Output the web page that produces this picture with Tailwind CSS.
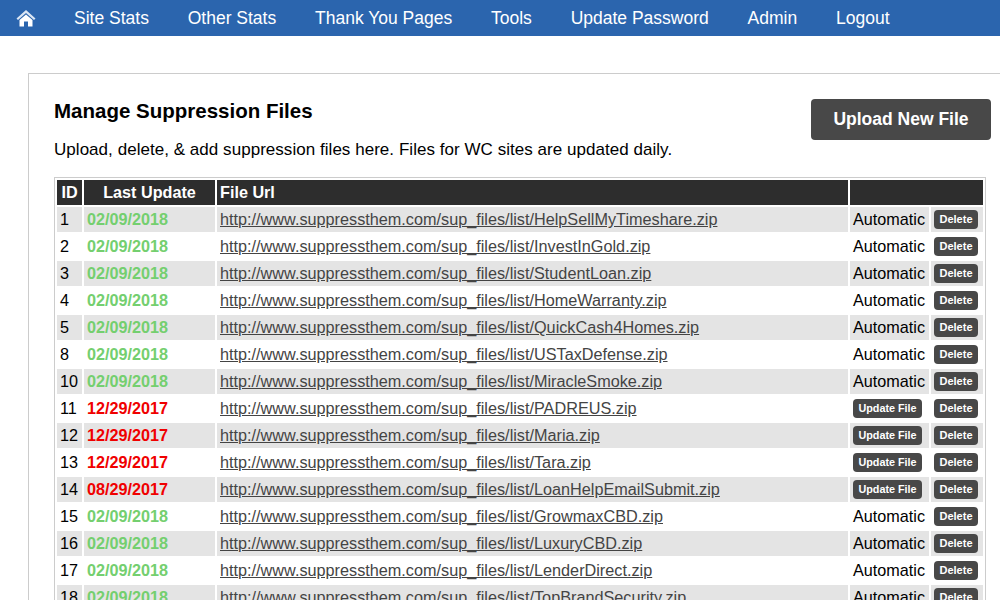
<!DOCTYPE html>
<html lang="en">
  <head>
    <meta charset="UTF-8" />
    <meta name="viewport" content="width=device-width, initial-scale=1.0" />
    <script src="https://cdn.jsdelivr.net/npm/@tailwindcss/browser@4"></script>
    <title>Manage Suppression Files</title>
  </head>
  <body class="bg-white text-black font-['Liberation_Sans',Arial,sans-serif] h-[600px] overflow-hidden">
    <nav class="h-[36px] bg-[#2b65ae] flex items-center text-white text-[17.5px] pl-[16px] gap-[38.8px]">
      <a href="#" class="w-[19.2px]">
        <svg viewBox="0 0 20 18" class="w-[20px] h-[18px]" fill="#fff">
          <path d="M10 1 L0.5 9.5 L2 11 L10 4 L18 11 L19.5 9.5 Z" fill="#dbe6f4" />
          <path d="M10 5.5 L3.5 11 V17.5 H8 V12.5 H12 V17.5 H16.5 V11 Z" />
        </svg>
      </a>
      <a href="#">Site Stats</a>
      <a href="#">Other Stats</a>
      <a href="#">Thank You Pages</a>
      <a href="#">Tools</a>
      <a href="#">Update Password</a>
      <a href="#">Admin</a>
      <a href="#">Logout</a>
    </nav>

    <div class="mt-[37px] ml-[28px] w-[1000px] border border-[#cccccc] pl-[25px] pt-[15px] pb-[20px]">
      <div class="flex justify-between w-[937px]">
        <div>
          <h2 class="text-[20.5px] leading-[23px] font-bold mt-[10px]">Manage Suppression Files</h2>
          <p class="text-[17px] leading-[18px] mt-[19px] tracking-[0.04px]">Upload, delete, &amp; add suppression files here. Files for WC sites are updated daily.</p>
        </div>
        <a href="#" class="mt-[10px] h-[41px] w-[180px] bg-[#484848] rounded-[4px] text-white text-[17.5px] font-bold flex items-center justify-center">Upload New File</a>
      </div>

      <table class="mt-[18px] w-[931px] table-fixed border-separate border-spacing-[2px] border border-[#cccccc] text-[16.2px]">
        <colgroup>
          <col class="w-[25px]" />
          <col class="w-[131px]" />
          <col class="w-[631px]" />
          <col class="w-[79px]" />
          <col class="w-[52px]" />
        </colgroup>
        <thead>
          <tr class="h-[25px] bg-[#2d2d2d] text-white font-bold">
            <th class="text-center font-bold p-0">ID</th>
            <th class="text-center font-bold p-0">Last Update</th>
            <th class="text-left font-bold p-0 pl-[3px]">File Url</th>
            <th class="p-0" colspan="2"></th>
          </tr>
        </thead>
        <tbody id="rows"></tbody>
      </table>
    </div>

    <script>
      var files = [
        [1, "02/09/2018", "HelpSellMyTimeshare", 0],
        [2, "02/09/2018", "InvestInGold", 0],
        [3, "02/09/2018", "StudentLoan", 0],
        [4, "02/09/2018", "HomeWarranty", 0],
        [5, "02/09/2018", "QuickCash4Homes", 0],
        [8, "02/09/2018", "USTaxDefense", 0],
        [10, "02/09/2018", "MiracleSmoke", 0],
        [11, "12/29/2017", "PADREUS", 1],
        [12, "12/29/2017", "Maria", 1],
        [13, "12/29/2017", "Tara", 1],
        [14, "08/29/2017", "LoanHelpEmailSubmit", 1],
        [15, "02/09/2018", "GrowmaxCBD", 0],
        [16, "02/09/2018", "LuxuryCBD", 0],
        [17, "02/09/2018", "LenderDirect", 0],
        [18, "02/09/2018", "TopBrandSecurity", 0],
      ];
      var body = document.getElementById("rows");
      files.forEach(function (f, i) {
        var tr = document.createElement("tr");
        var shade = i % 2 == 0 ? "bg-[#e4e4e4]" : "bg-white";
        var color = f[1] == "02/09/2018" ? "text-[#74cf6f]" : "text-[#f00000]";
        var action = f[3]
          ? '<a href="#" class="w-[69px] h-[19px] bg-[#484848] rounded-[4px] text-white text-[10.8px] font-bold flex items-center justify-center">Update File</a>'
          : "Automatic";
        tr.className = "h-[25px] " + shade;
        tr.innerHTML =
          '<td class="p-0 pl-[3px]">' + f[0] + "</td>" +
          '<td class="p-0 pl-[3px] font-bold ' + color + '">' + f[1] + "</td>" +
          '<td class="p-0 pl-[3px]"><a href="#" class="underline text-[#444444] text-[16.24px]">http://www.suppressthem.com/sup_files/list/' + f[2] + ".zip</a></td>" +
          '<td class="p-0 pl-[3px]">' + action + "</td>" +
          '<td class="p-0"><a href="#" class="ml-[3px] w-[44px] h-[19px] bg-[#484848] rounded-[4px] text-white text-[11px] font-bold flex items-center justify-center">Delete</a></td>';
        body.appendChild(tr);
      });
    </script>
  </body>
</html>
